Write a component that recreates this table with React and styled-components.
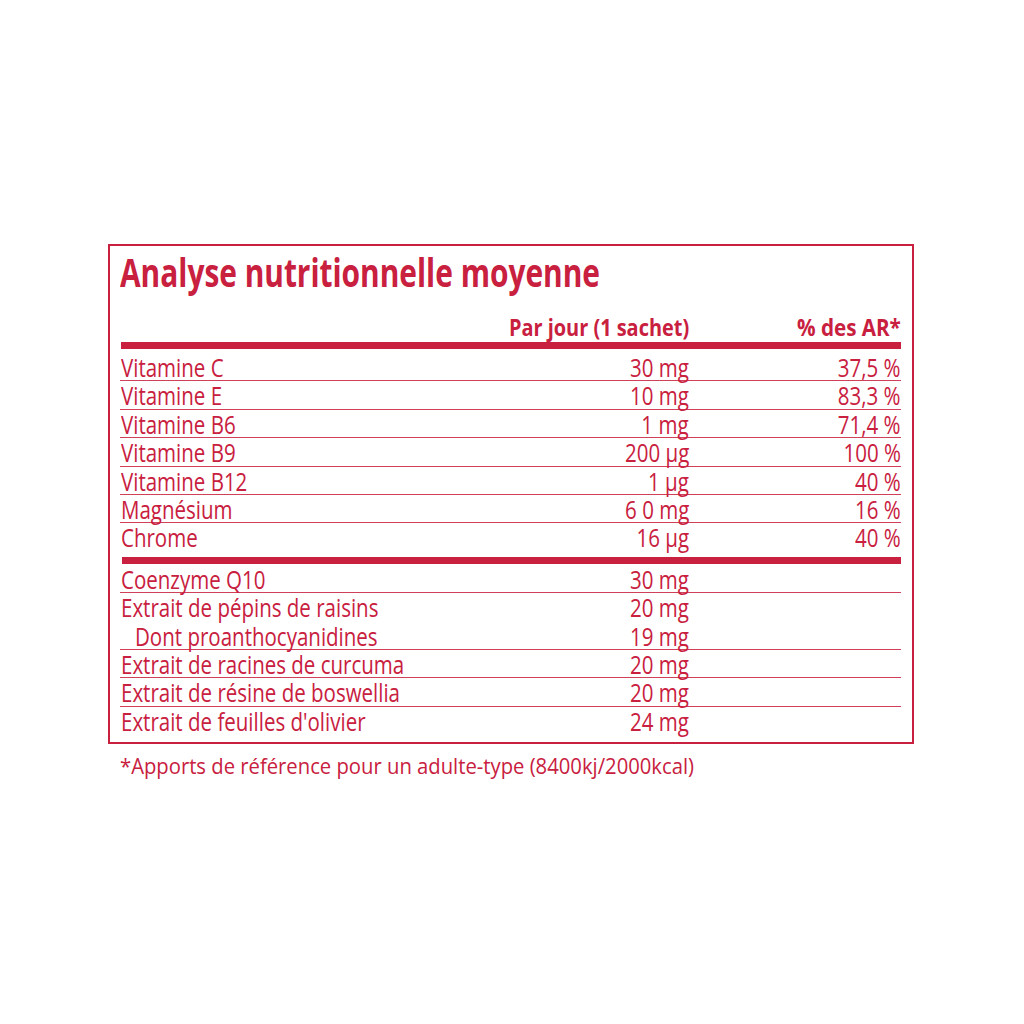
import React from "react";
import styled, { createGlobalStyle } from "styled-components";

const RED = "#c8203e";
const LINE = "#d0405a";

const Global = createGlobalStyle`
  html, body { margin: 0; padding: 0; background: #ffffff; }
  body { font-family: "Open Sans", "Noto Sans", "Liberation Sans", sans-serif; color: ${RED}; }
`;

const Page = styled.div`
  width: 1024px;
  height: 1024px;
  padding-top: 244px;
  padding-left: 108px;
  box-sizing: border-box;
`;

const Card = styled.section`
  width: 806px;
  height: 500px;
  box-sizing: border-box;
  border: 2px solid ${RED};
  padding: 6px 11px 0 10px;
  display: flex;
  flex-direction: column;
`;

/* condensed lettering: the artwork uses a condensed humanist face */
const Sq = styled.span`
  display: inline-block;
  white-space: nowrap;
  transform: scaleX(${(p) => p.$s || 0.82});
  transform-origin: ${(p) => (p.$right ? "right" : "left")} center;
`;

const Title = styled.h1`
  margin: 0;
  font-size: 38.7px;
  line-height: 40px;
  font-weight: 700;
  color: ${RED};
`;

const Grid = styled.div`
  display: grid;
  grid-template-columns: 1fr 200px 212px;
`;

const HeadRow = styled(Grid)`
  margin-top: 21px;
  height: 28px;
  font-size: 24px;
  font-weight: 700;
  line-height: 28px;
`;

const Bar = styled.div`
  height: 7px;
  background: ${RED};
  margin: ${(p) => p.$m};
`;

const Row = styled(Grid)`
  height: 28.4px;
  box-sizing: border-box;
  padding-top: 1px;
  border-bottom: 1.4px solid ${(p) => (p.$line ? LINE : "transparent")};
  font-size: 25px;
  line-height: 26px;
`;

const Name = styled.div`
  padding-left: ${(p) => (p.$indent ? "15px" : "1px")};
  white-space: nowrap;
`;

const Num = styled.div`
  display: flex;
  justify-content: flex-end;
  white-space: nowrap;
`;

const Foot = styled.p`
  margin: 7px 0 0 12px;
  font-size: 22px;
  line-height: 28px;
  white-space: nowrap;
`;

const vitamins = [
  ["Vitamine C", "30 mg", "37,5 %", true],
  ["Vitamine E", "10 mg", "83,3 %", true],
  ["Vitamine B6", "1 mg", "71,4 %", true],
  ["Vitamine B9", "200 µg", "100 %", true],
  ["Vitamine B12", "1 µg", "40 %", true],
  ["Magnésium", "6 0 mg", "16 %", true],
  ["Chrome", "16 µg", "40 %", false],
];

const extracts = [
  ["Coenzyme Q10", "30 mg", true, false],
  ["Extrait de pépins de raisins", "20 mg", false, false],
  ["Dont proanthocyanidines", "19 mg", true, true],
  ["Extrait de racines de curcuma", "20 mg", true, false],
  ["Extrait de résine de boswellia", "20 mg", true, false],
  ["Extrait de feuilles d'olivier", "24 mg", false, false],
];

export default function App() {
  return (
    <Page>
      <Global />
      <Card>
        <Title>
          <Sq $s={0.772}>Analyse nutritionnelle moyenne</Sq>
        </Title>
        <HeadRow>
          <div />
          <Num>
            <Sq $s={0.83} $right>Par jour (1 sachet)</Sq>
          </Num>
          <Num>
            <Sq $s={0.86} $right>% des AR*</Sq>
          </Num>
        </HeadRow>
        <Bar $m="1px 0 4px 1px" />
        {vitamins.map(([n, v, p, l]) => (
          <Row key={n} $line={l}>
            <Name>
              <Sq>{n}</Sq>
            </Name>
            <Num>
              <Sq $right>{v}</Sq>
            </Num>
            <Num>
              <Sq $right>{p}</Sq>
            </Num>
          </Row>
        ))}
        <Bar $m="5.6px 0 0.6px 2px" />
        {extracts.map(([n, v, l, ind]) => (
          <Row key={n} $line={l}>
            <Name $indent={ind}>
              <Sq>{n}</Sq>
            </Name>
            <Num>
              <Sq $right>{v}</Sq>
            </Num>
            <div />
          </Row>
        ))}
      </Card>
      <Foot>
        <Sq $s={0.92}>*Apports de référence pour un adulte-type (8400kj/2000kcal)</Sq>
      </Foot>
    </Page>
  );
}
